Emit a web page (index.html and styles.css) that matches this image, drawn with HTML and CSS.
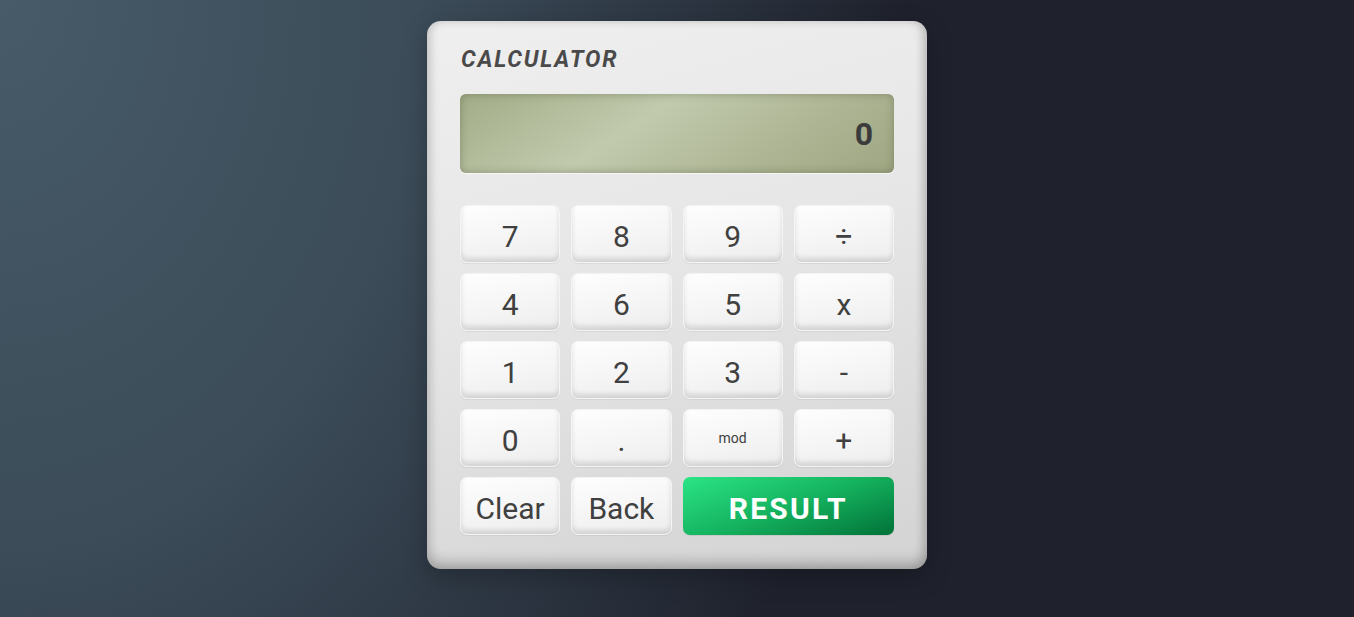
FILE: index.html
```html
<!DOCTYPE html>
<html lang="en">
<head>
<meta charset="utf-8">
<title>Calculator</title>
<link rel="stylesheet" href="styles.css">
</head>
<body>
<main class="calc">
  <h1 class="title">CALCULATOR</h1>
  <div class="screen"><span class="value">0</span></div>
  <div class="keys">
    <button class="key">7</button>
    <button class="key">8</button>
    <button class="key">9</button>
    <button class="key">÷</button>
    <button class="key">4</button>
    <button class="key">6</button>
    <button class="key">5</button>
    <button class="key">x</button>
    <button class="key">1</button>
    <button class="key">2</button>
    <button class="key">3</button>
    <button class="key">-</button>
    <button class="key">0</button>
    <button class="key">.</button>
    <button class="key key-small">mod</button>
    <button class="key">+</button>
    <button class="key">Clear</button>
    <button class="key">Back</button>
    <button class="key key-result">RESULT</button>
  </div>
</main>
</body>
</html>
```
FILE: styles.css
```css
* { box-sizing: border-box; }
html, body { margin: 0; height: 100%; }
body {
  background: radial-gradient(ellipse 1000px 1300px at 0 0, #475b68 0%, #3c4c59 42%, #2b3440 70%, #1f222d 90%);
  background-color: #1f222d;
  display: flex;
  justify-content: center;
  align-items: flex-start;
  padding-top: 21px;
  font-family: Roboto, "Noto Sans", sans-serif;
  overflow: hidden;
}
.calc {
  width: 500px;
  height: 548px;
  border-radius: 14px;
  padding: 25px 33px 33px 33px;
  background: linear-gradient(165deg, #efefef 0%, #e6e6e6 45%, #d3d3d3 100%);
  box-shadow:
    inset 0 -9px 12px rgba(0,0,0,0.16),
    inset 5px 0 8px rgba(0,0,0,0.07),
    inset -5px 0 8px rgba(0,0,0,0.12),
    0 8px 24px rgba(0,0,0,0.25);
  display: flex;
  flex-direction: column;
}
.title {
  margin: 0 0 0 1px;
  font-size: 23px;
  line-height: 28px;
  font-weight: 700;
  font-style: italic;
  color: #4a4a4a;
  letter-spacing: 1.8px;
  height: 48px;
}
.screen {
  height: 79px;
  border-radius: 6px;
  background: linear-gradient(147deg, #a3ac87 0%, #c1caad 40%, #adb594 72%, #9ea682 100%);
  box-shadow: inset 0 0 9px rgba(60,70,40,0.35), 0 1px 0 rgba(255,255,255,0.6);
  display: flex;
  align-items: center;
  justify-content: flex-end;
  padding-right: 21px;
}
.value {
  font-size: 32px;
  font-weight: 700;
  color: #3b3b3b;
}
.keys {
  margin-top: 32px;
  display: grid;
  grid-template-columns: repeat(4, 1fr);
  grid-auto-rows: 58px;
  column-gap: 11px;
  row-gap: 10px;
}
.key {
  font-family: Roboto, "Noto Sans", sans-serif;
  font-size: 30px;
  font-weight: 400;
  color: #404040;
  border: 1px solid #f4f4f4;
  border-radius: 7px;
  background: linear-gradient(170deg, #fefefe 0%, #f4f4f4 60%, #ededed 100%);
  box-shadow: inset 0 -4px 5px rgba(0,0,0,0.12), 0 1px 1px rgba(0,0,0,0.06);
  padding: 4px 0 0 0;
  display: flex;
  align-items: center;
  justify-content: center;
}
.key-small { font-size: 14px; padding-top: 0; }
.key-result {
  grid-column: span 2;
  color: #fff;
  font-weight: 700;
  letter-spacing: 2.2px;
  border: none;
  background: linear-gradient(160deg, #2be486 0%, #15b35f 50%, #017238 100%);
  box-shadow: 0 1px 1px rgba(0,0,0,0.08);
}
```
